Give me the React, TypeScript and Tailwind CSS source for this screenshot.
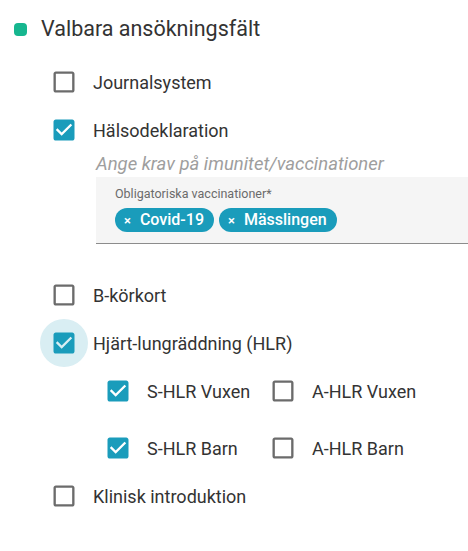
import React from "react";

const TEAL = "#1a9cbb";

function Box({ checked }: { checked?: boolean }) {
  if (checked) {
    return (
      <svg width={28} height={28} viewBox="0 0 24 24" fill={TEAL}>
        <path d="M19 3H5c-1.11 0-2 .9-2 2v14c0 1.1.89 2 2 2h14c1.11 0 2-.9 2-2V5c0-1.1-.89-2-2-2zm-9 14l-5-5 1.41-1.41L10 14.17l7.59-7.59L19 8l-9 9z" />
      </svg>
    );
  }
  return (
    <svg width={28} height={28} viewBox="0 0 24 24" fill="#6b6b6b">
      <path d="M19 5v14H5V5h14m0-2H5c-1.1 0-2 .9-2 2v14c0 1.1.9 2 2 2h14c1.1 0 2-.9 2-2V5c0-1.1-.9-2-2-2z" />
    </svg>
  );
}

function Row({
  label,
  checked,
  focus,
  className = ""
}: {
  label: string;
  checked?: boolean;
  focus?: boolean;
  className?: string;
}) {
  return (
    <div className={`flex h-12 items-center ${className}`}>
      <div
        className={`flex h-12 w-12 shrink-0 items-center justify-center rounded-full ${
          focus ? "bg-[#d9eef3]" : ""
        }`}
      >
        <Box checked={checked} />
      </div>
      <span className="ml-[5px] whitespace-nowrap text-[18px] text-[#333333]">{label}</span>
    </div>
  );
}

function Chip({ label }: { label: string }) {
  return (
    <span className="flex h-[24px] items-center rounded-full bg-[#1a9cbb] pl-[9px] pr-[10px] text-white">
      <span className="text-[13px] font-medium leading-none">×</span>
      <span className="ml-[9px] text-[16px] font-medium leading-none">{label}</span>
    </span>
  );
}

export default function App() {
  return (
    <div className="h-[551px] w-[468px] overflow-hidden bg-white font-['Roboto',sans-serif]">
      <div className="flex h-[58px] items-center">
        <span className="ml-[14px] h-[13px] w-[13px] rounded-[4px] bg-[#16b68f]" />
        <span className="ml-[14px] text-[21.5px] text-[#333333]">Valbara ansökningsfält</span>
      </div>

      <div className="pl-10">
        <Row label="Journalsystem" />
        <Row label="Hälsodeklaration" checked />

        <div className="ml-[56px]">
          <p className="whitespace-nowrap text-[18.5px] italic leading-[20px] text-[#9e9e9e]">
            Ange krav på imunitet/vaccinationer
          </p>
          <div className="mt-[3px] h-[67px] w-[400px] border-b border-[#8c8c8c] bg-[#f5f5f5] pl-[19px] pt-[9px]">
            <p className="text-[12.5px] leading-[16px] text-[#6b6b6b]">Obligatoriska vaccinationer*</p>
            <div className="mt-[6px] flex gap-[5px]">
              <Chip label="Covid-19" />
              <Chip label="Mässlingen" />
            </div>
          </div>
        </div>

        <Row label="B-körkort" className="mt-[27px]" />
        <Row label="Hjärt-lungräddning (HLR)" checked focus />

        <div className="ml-[54px] grid grid-cols-[165px_auto] gap-y-[9px]">
          <Row label="S-HLR Vuxen" checked />
          <Row label="A-HLR Vuxen" />
          <Row label="S-HLR Barn" checked />
          <Row label="A-HLR Barn" />
        </div>

        <Row label="Klinisk introduktion" />
      </div>
    </div>
  );
}
